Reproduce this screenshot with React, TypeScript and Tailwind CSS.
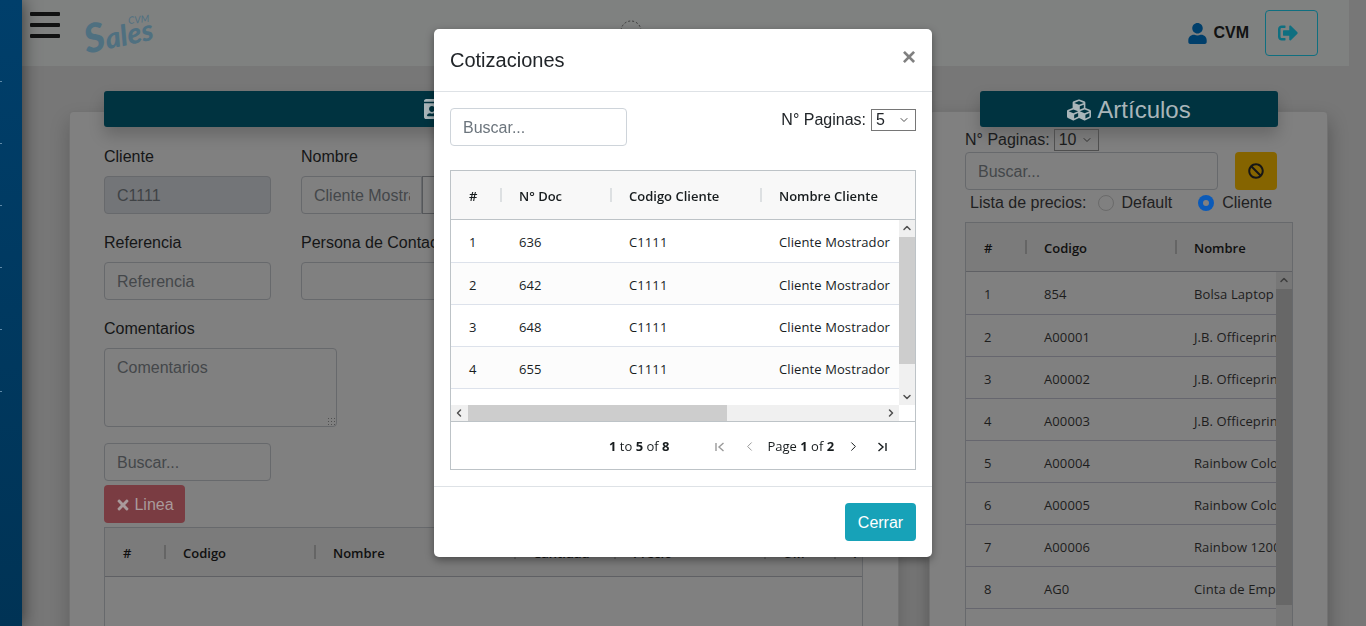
import { FaBan, FaCubes, FaIdCard, FaSignOutAlt, FaTimes, FaUser } from "react-icons/fa";
import { ChevronDown, ChevronLeft, ChevronRight, ChevronUp } from "lucide-react";

const arial = "font-['Liberation_Sans',Arial,sans-serif]";
const grid = "font-['Open_Sans',sans-serif]";

function Field({ label, value, placeholder, disabled }: { label: string; value?: string; placeholder?: string; disabled?: boolean }) {
  return (
    <div className="w-[167px]">
      <div className="mb-[7px] h-[24px] text-[16px] leading-[24px] text-[#151617]">{label}</div>
      <div
        className={`flex h-[38px] items-center rounded-[4px] border border-[#67696c] px-[12px] pt-[2px] text-[16px] ${
          disabled ? "bg-[#737578] text-[#404346]" : "bg-[#808080] text-[#44474a]"
        }`}
      >
        {value ?? placeholder}
      </div>
    </div>
  );
}

function HeaderCells({ cols, dark }: { cols: { name: string; w: number }[]; dark?: boolean }) {
  return (
    <div className={`flex h-[49px] border-b ${dark ? "border-[#5f6064] bg-[#7b7b7b] text-[#101010]" : "border-[#bdc3c7] bg-[#f8f8f8] text-[#181d1f]"}`}>
      {cols.map((c, i) => (
        <div key={c.name} style={{ width: c.w }} className="relative flex shrink-0 items-center pt-[4px] pl-[18px] text-[13px] font-semibold whitespace-nowrap">
          {c.name}
          {i < cols.length - 1 && (
            <span className={`absolute top-[17px] right-[-1px] h-[14px] w-[2px] ${dark ? "bg-[#656565]" : "bg-[#dde0e2]"}`} />
          )}
        </div>
      ))}
    </div>
  );
}

function VScroll({ thumbTop, thumbH, dark }: { thumbTop: number; thumbH: number; dark?: boolean }) {
  return (
    <div className={`relative w-[16px] shrink-0 ${dark ? "bg-[#777777] text-[#3d3d3d]" : "bg-[#f0f0f0] text-[#505050]"}`}>
      <ChevronUp size={12} strokeWidth={3} className="absolute top-[2px] left-[2px]" />
      <div style={{ top: thumbTop, height: thumbH }} className={`absolute left-0 w-full ${dark ? "bg-[#676767]" : "bg-[#cdcdcd]"}`} />
      {!dark && <ChevronDown size={12} strokeWidth={3} className="absolute bottom-[2px] left-[2px]" />}
    </div>
  );
}

const quotes = [
  ["1", "636"],
  ["2", "642"],
  ["3", "648"],
  ["4", "655"],
];

const articles = [
  ["1", "854", "Bolsa Laptop"],
  ["2", "A00001", "J.B. Officeprint 1420"],
  ["3", "A00002", "J.B. Officeprint 1111"],
  ["4", "A00003", "J.B. Officeprint 1186"],
  ["5", "A00004", "Rainbow Color Printer"],
  ["6", "A00005", "Rainbow Color Printer"],
  ["7", "A00006", "Rainbow 1200"],
  ["8", "AG0", "Cinta de Empaque"],
];

function LeftCard() {
  return (
    <section className="h-[600px] w-[830px] shrink-0 rounded-[4px] border border-[#727272] bg-[#808080] px-[34px] shadow-[0_10px_20px_rgba(0,0,0,0.2)]">
      <div className="mt-[-21px] flex h-[36px] w-[759px] items-center justify-center gap-[6px] rounded-[3px] bg-[#003340] text-[24px] text-[#a9b5b9] shadow-[0_8px_16px_rgba(0,0,0,0.2)]">
        <FaIdCard size={26} />
        <span>Clientes</span>
      </div>
      <div className="mt-[18px] flex gap-[30px]">
        <Field label="Cliente" value="C1111" disabled />
        <div className="w-[167px]">
          <div className="mb-[7px] h-[24px] text-[16px] leading-[24px] text-[#151617]">Nombre</div>
          <div className="flex h-[38px] w-[180px]">
            <div className="flex w-[121px] items-center overflow-hidden rounded-l-[4px] border border-[#67696c] pt-[2px] pl-[12px] text-[16px] whitespace-nowrap text-[#44474a]">
              <span className="w-[96px] overflow-hidden">Cliente Mostrador</span>
            </div>
            <div className="w-[59px] border border-[#55575a]" />
          </div>
        </div>
      </div>
      <div className="mt-[17px] flex gap-[30px]">
        <Field label="Referencia" placeholder="Referencia" />
        <Field label="Persona de Contacto" placeholder="" />
      </div>
      <div className="mt-[17px] mb-[7px] h-[24px] text-[16px] leading-[24px] text-[#151617]">Comentarios</div>
      <div className="relative h-[79px] w-[233px] rounded-[4px] border border-[#67696c] px-[12px] py-[7px] text-[16px] text-[#44474a]">
        Comentarios
        <span className="absolute right-[1px] bottom-[1px] h-[8px] w-[8px] bg-[radial-gradient(#505050_1px,transparent_1px)] bg-[length:3px_3px]" />
      </div>
      <div className="mt-[16px] flex h-[38px] w-[167px] items-center rounded-[4px] border border-[#67696c] px-[12px] pt-[2px] text-[16px] text-[#44474a]">
        Buscar...
      </div>
      <div className="mt-[4px] flex h-[38px] w-[81px] items-center justify-center gap-[3px] rounded-[4px] bg-[#7a3c42] pt-[1px] text-[16px] text-[#a99a9b]">
        <FaTimes size={16} />
        <span>Linea</span>
      </div>
      <div className={`mt-[4px] h-[300px] w-[759px] border border-[#67696c] ${grid}`}>
        <HeaderCells
          dark
          cols={[
            { name: "#", w: 60 },
            { name: "Codigo", w: 150 },
            { name: "Nombre", w: 200 },
            { name: "Cantidad", w: 100 },
            { name: "Precio", w: 150 },
            { name: "UM", w: 70 },
            { name: "I", w: 27 },
          ]}
        />
      </div>
    </section>
  );
}

function RightCard() {
  return (
    <section className="h-[600px] w-[399px] shrink-0 rounded-[4px] border border-[#727272] bg-[#808080] pl-[35px] shadow-[0_10px_20px_rgba(0,0,0,0.3)]">
      <div className="mt-[-21px] ml-[15px] flex h-[36px] w-[298px] items-center justify-center gap-[6px] rounded-[3px] bg-[#003340] pt-[2px] text-[24px] text-[#a9b5b9] shadow-[0_8px_16px_rgba(0,0,0,0.2)]">
        <FaCubes size={24} />
        <span>Artículos</span>
      </div>
      <div className="mt-[2px] flex h-[22px] items-center text-[16px] text-[#1a1b1c]">
        N° Paginas:
        <div className="ml-[4px] flex h-[22px] w-[45px] items-center justify-between border border-[#4f4f4f] pr-[5px] pl-[4px]">
          10
          <ChevronDown size={12} className="text-[#303030]" />
        </div>
      </div>
      <div className="mt-[1px] flex gap-[17px]">
        <div className="flex h-[38px] w-[253px] items-center rounded-[4px] border border-[#67696c] px-[12px] pt-[2px] text-[16px] text-[#44474a]">
          Buscar...
        </div>
        <div className="flex h-[38px] w-[42px] items-center justify-center rounded-[4px] bg-[#856400] text-[#161616]">
          <FaBan size={16} />
        </div>
      </div>
      <div className="mt-[1px] flex h-[24px] items-center pl-[5px] text-[16px] text-[#1f2022]">
        <span>Lista de precios:</span>
        <span className="ml-[11px] h-[16px] w-[16px] rounded-full border border-[#6a6a6a] bg-[#808080]" />
        <span className="ml-[8px]">Default</span>
        <span className="ml-[26px] flex h-[16px] w-[16px] items-center justify-center rounded-full bg-[#0b5ab8]">
          <span className="h-[6px] w-[6px] rounded-full bg-[#808080]" />
        </span>
        <span className="ml-[8px]">Cliente</span>
      </div>
      <div className={`mt-[7px] h-[450px] w-[328px] border border-[#67696c] ${grid}`}>
        <HeaderCells
          dark
          cols={[
            { name: "#", w: 60 },
            { name: "Codigo", w: 150 },
            { name: "Nombre", w: 116 },
          ]}
        />
        <div className="flex h-[400px]">
          <div className="w-[310px] overflow-hidden">
            {articles.map((a, i) => (
              <div
                key={a[0]}
                className={`flex items-center border-b border-[#66666e] pt-[4px] text-[13px] tracking-[0.1px] text-[#1d1d1d] ${i === 0 ? "h-[43px]" : "h-[42px]"}`}
              >
                <span className="w-[60px] shrink-0 pl-[18px]">{a[0]}</span>
                <span className="w-[150px] shrink-0 pl-[18px]">{a[1]}</span>
                <span className="shrink-0 pl-[18px] whitespace-nowrap">{a[2]}</span>
              </div>
            ))}
          </div>
          <VScroll dark thumbTop={17} thumbH={316} />
        </div>
      </div>
    </section>
  );
}

function QuotesModal() {
  return (
    <div className="fixed inset-0 flex justify-center pt-[29px]">
      <div className={`h-[528px] w-[498px] rounded-[5px] bg-white shadow-[0_3px_9px_rgba(0,0,0,0.4)] ${arial}`}>
        <div className="flex h-[63px] items-center justify-between border-b border-[#dee2e6] px-[16px]">
          <span className="text-[20px] text-[#212529]">Cotizaciones</span>
          <span className="mt-[-7px] text-[24px] leading-none font-bold text-[#808080]">×</span>
        </div>
        <div className="h-[395px] border-b border-[#dee2e6] p-[16px]">
          <div className="flex justify-between">
            <div className="flex h-[38px] w-[177px] items-center rounded-[4px] border border-[#ced4da] px-[12px] pt-[2px] text-[16px] text-[#6c757d]">
              Buscar...
            </div>
            <div className="mt-[1px] flex h-[22px] items-center text-[16px] text-[#212529]">
              N° Paginas:
              <div className="ml-[5px] flex h-[22px] w-[45px] items-center justify-between border border-[#767676] pr-[5px] pl-[4px]">
                5
                <ChevronDown size={12} className="text-[#505050]" />
              </div>
            </div>
          </div>
          <div className={`mt-[24px] h-[300px] border border-[#bdc3c7] ${grid}`}>
            <HeaderCells
              cols={[
                { name: "#", w: 50 },
                { name: "N° Doc", w: 110 },
                { name: "Codigo Cliente", w: 150 },
                { name: "Nombre Cliente", w: 154 },
              ]}
            />
            <div className="flex h-[185px]">
              <div className="w-[448px] overflow-hidden">
                {quotes.map((q, i) => (
                  <div
                    key={q[0]}
                    className={`flex items-center border-b border-[#dde2eb] pt-[4px] text-[13px] tracking-[0.1px] text-[#181d1f] ${i % 2 === 1 ? "bg-[#fcfcfc]" : "bg-white"} ${i === 0 ? "h-[43px]" : "h-[42px]"}`}
                  >
                    <span className="w-[50px] shrink-0 pl-[18px]">{q[0]}</span>
                    <span className="w-[110px] shrink-0 pl-[18px]">{q[1]}</span>
                    <span className="w-[150px] shrink-0 pl-[18px]">C1111</span>
                    <span className="shrink-0 pl-[18px] whitespace-nowrap">Cliente Mostrador</span>
                  </div>
                ))}
              </div>
              <VScroll thumbTop={17} thumbH={127} />
            </div>
            <div className="flex h-[16px] w-[448px] items-center bg-[#f0f0f0] text-[#505050]">
              <ChevronLeft size={12} strokeWidth={3} className="ml-[2px]" />
              <div className="ml-[3px] h-full w-[259px] bg-[#cdcdcd]" />
              <ChevronRight size={12} strokeWidth={3} className="mr-[2px] ml-auto" />
            </div>
            <div className="flex h-[48px] items-center border-t border-[#bdc3c7] pt-[2px] text-[13px] text-[#181d1f]">
              <span className="ml-[158px]">
                <b>1</b> to <b>5</b> of <b>8</b>
              </span>
              <FirstIcon className="ml-[45px] text-[#9a9a9a]" />
              <ChevronLeft size={15} strokeWidth={1.6} className="ml-[16px] text-[#9a9a9a]" />
              <span className="ml-[10px]">
                Page <b>1</b> of <b>2</b>
              </span>
              <ChevronRight size={15} strokeWidth={1.6} className="ml-[12px]" />
              <LastIcon className="ml-[15px]" />
            </div>
          </div>
        </div>
        <div className="flex justify-end p-[16px]">
          <div className="flex h-[38px] w-[71px] items-center justify-center rounded-[4px] bg-[#17a2b8] pt-[2px] text-[16px] text-white">Cerrar</div>
        </div>
      </div>
    </div>
  );
}

function FirstIcon({ className }: { className?: string }) {
  return (
    <svg width="12" height="12" viewBox="0 0 12 12" fill="none" stroke="currentColor" strokeWidth="1.4" className={className}>
      <path d="M2 2v8M9.5 2 5 6l4.5 4" />
    </svg>
  );
}

function LastIcon({ className }: { className?: string }) {
  return (
    <svg width="12" height="12" viewBox="0 0 12 12" fill="none" stroke="currentColor" strokeWidth="1.4" className={className}>
      <path d="M10 2v8M2.5 2 7 6l-4.5 4" />
    </svg>
  );
}

export default function App() {
  return (
    <div className={`relative flex h-[626px] overflow-hidden bg-[#777777] ${arial}`}>
      <aside className="relative z-10 w-[22px] shrink-0 bg-gradient-to-b from-[#003f6b] to-[#003355] shadow-[0_0_18px_rgba(0,0,0,0.6)]">
        <div className="flex flex-col gap-[61px] pt-[81px]">
          {[0, 1, 2, 3, 4, 5].map((n) => (
            <span key={n} className="h-[1px] w-[2px] bg-[#5f8aa8]" />
          ))}
        </div>
      </aside>
      <div className="min-w-0 flex-1">
        <header className="flex h-[66px] w-[1327px] items-center bg-[#7f8180] pr-[31px]">
          <div className="mt-[12px] ml-[8px] flex h-[26px] w-[30px] flex-col justify-between self-start">
            <span className="h-[4px] rounded-[1px] bg-[#111212]" />
            <span className="h-[4px] rounded-[1px] bg-[#111212]" />
            <span className="h-[4px] rounded-[1px] bg-[#111212]" />
          </div>
          <div className="relative mt-[13px] ml-[24px] h-[44px] w-[72px] self-start font-['Lato',sans-serif] text-[#4f7080] italic">
            <span className="absolute top-[6px] left-[0px] origin-left -rotate-12 text-[29px] leading-none font-black whitespace-nowrap">
              <span className="text-[40px]">S</span>ales
            </span>
            <span className="absolute top-[1px] left-[44px] -rotate-6 text-[10px] leading-none">CVM</span>
          </div>
          <svg width="22" height="22" viewBox="0 0 22 22" fill="none" stroke="#3a3a3a" strokeDasharray="2 2" className="mt-[-5px] ml-[464px]">
            <circle cx="11" cy="11" r="10" />
          </svg>
          <div className="ml-auto flex items-center">
            <FaUser size={21} className="text-[#003f6b]" />
            <span className="ml-[5px] text-[16px] font-bold text-[#111212]">CVM</span>
            <div className="ml-[16px] flex h-[46px] w-[53px] items-center justify-center rounded-[4px] border border-[#0f6f80] pr-[7px] text-[#0f6f80]">
              <FaSignOutAlt size={20} />
            </div>
          </div>
        </header>
        <main className="ml-[47px] flex gap-[30px] pt-[45px]">
          <LeftCard />
          <RightCard />
        </main>
      </div>
      <QuotesModal />
    </div>
  );
}
